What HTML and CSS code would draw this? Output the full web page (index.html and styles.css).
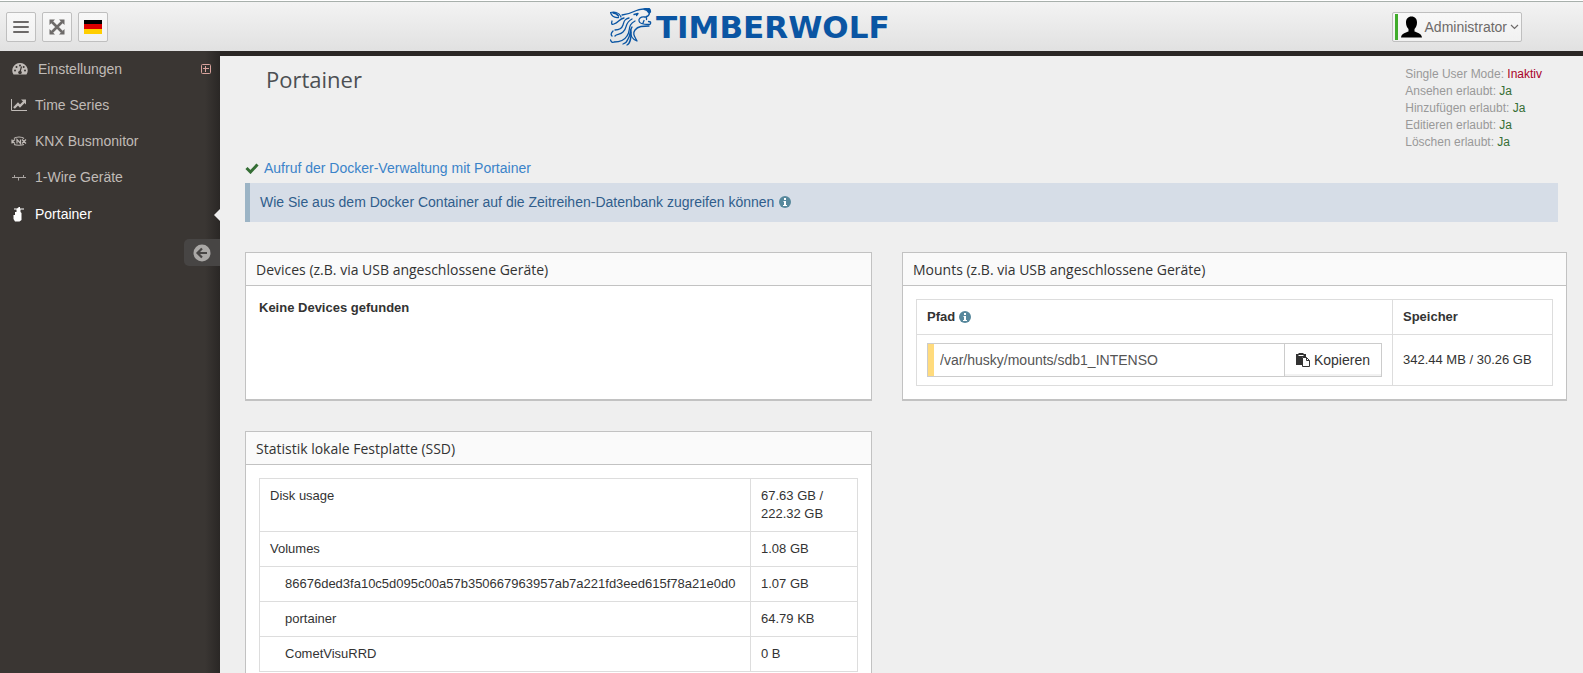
FILE: index.html
```html
<!DOCTYPE html>
<html lang="de">

<head>
    <meta charset="UTF-8">
    <meta name="viewport" content="width=device-width, initial-scale=1.0">
    <title>Portainer - Timberwolf</title>
    <link rel="stylesheet" href="styles.css">
</head>

<body>
    <header class="topbar">
        <div class="tools">
            <button type="button" class="tool" aria-label="Menü">
                <svg width="16" height="14" viewBox="0 0 16 14"><path d="M1 2h14M1 7h14M1 12h14" stroke="#6d6a69" stroke-width="2" stroke-linecap="round"/></svg>
            </button>
            <button type="button" class="tool" aria-label="Vollbild">
                <svg width="16" height="16" viewBox="0 0 16 16"><path d="M3 3l10 10M13 3L3 13" stroke="#6d6a69" stroke-width="2.600"/><path d="M.5.5h5.500L.5 6zM15.500.5H10L15.500 6zM.5 15.500H6L.5 10zM15.500 15.500H10l5.500-5.500z" fill="#6d6a69"/></svg>
            </button>
            <button type="button" class="tool" aria-label="Deutsch">
                <svg width="18" height="14" viewBox="0 0 18 14"><path d="M0 0h18v5H0z"/><path d="M0 4h18v6H0z" fill="#d00"/><path d="M0 9h18v5H0z" fill="#ffce00"/></svg>
            </button>
        </div>

        <a href="#" class="brand">
            <svg width="42" height="38" viewBox="0 0 42 38" fill="none" stroke="#0a55a3" stroke-width="1.300" stroke-linecap="round" stroke-linejoin="round">
                <path d="M11 9C9 4 4 3.500.5 4.500c1 3.500 4 5.500 8 5M3 5c2.500 0 4 1 5.500 3"/>
                <path d="M12 7c5-.5 8-1.500 12-3.500 3-1.500 6-2.500 13-3"/>
                <path d="M34 1.500L39 .5c1.500.5 1.500 2 1.500 3.500l-1.500 1L37 2.500z" fill="#0a55a3"/>
                <path d="M39.500 5.500c-1 3-3 3.500-5 3.500-4-.5-6 2-5.500 4 .5 3 5 3.500 9.500 3.500 2 0 2.500-1 2-2.500l-2-.5M36.500 8.500v3M33 15l1-2.500"/>
                <path d="M24 6.500l4-1-1.500 2"/>
                <path d="M39 18c-6 0-11 0-14 4-3 4 0 7 2 11-5-2-7-6-6-11"/>
                <path d="M19 10c-5 1-5 4-6 7s-4 5-8 5M14 10C9 11 9 14 4 16M2 13c-1 3 0 4 2 3"/>
                <path d="M22 11c-8 4-4 9-9 13-3 3-6 2-8 4M3 23c-2 2-2 4-1 5"/>
                <path d="M25 13c-8 4-4 10-8 15-3 5-9 6-13 6M.5 32c.5 2 2 3 4 2"/>
                <path d="M22 19c-3 4-1 8-4 12-1 3-2 4-5 5M17 37c4-2 4-8 4-13"/>
            </svg>
            <span>TIMBERWOLF</span>
        </a>

        <button type="button" class="user">
            <svg width="21" height="22" viewBox="0 0 21 22"><path d="M10.500.5c3.500 0 5.500 2.500 5.500 6 0 3-1 5-2.500 6.500v2.500c2 1 7 1.500 7.500 6H0c.5-4.500 5.500-5 7.500-6V13C6 11.500 5 9.500 5 6.500c0-3.500 2-6 5.500-6z"/></svg>
            <span>Administrator</span>
            <svg width="9" height="6" viewBox="0 0 9 6"><path d="M1 1l3.500 3.500L8 1" fill="none" stroke="#6d6a69" stroke-width="1.200"/></svg>
        </button>
    </header>

    <div class="layout">
        <aside class="sidebar">
            <nav>
                <a href="#" class="nav-item parent">
                    <svg width="16" height="14" viewBox="0 0 16 14"><path d="M8 1a7.500 7.500 0 0 1 6.500 11.500H1.500A7.500 7.500 0 0 1 8 1z" fill="#c0bbb7"/><path d="M8 10l1.500-5.500" stroke="#3a3633" stroke-width="1.200"/><g fill="#3a3633"><circle cx="8" cy="10.500" r="1.800"/><circle cx="3" cy="8.500" r="1"/><circle cx="4.500" cy="5" r="1"/><circle cx="8" cy="3.500" r="1"/><circle cx="11.700" cy="5" r="1"/><circle cx="13" cy="8.500" r="1"/></g></svg>
                    <span>Einstellungen</span>
                    <svg class="expand" width="10" height="10" viewBox="0 0 10 10"><path d="M1.500.5h7a1 1 0 0 1 1 1v7a1 1 0 0 1-1 1h-7a1 1 0 0 1-1-1v-7a1 1 0 0 1 1-1zM2 4.500h6M4.500 2v6" fill="none" stroke="#d8a39d"/></svg>
                </a>
                <a href="#" class="nav-item">
                    <svg width="16" height="14" viewBox="0 0 16 14"><path d="M.5 1v11.500H16" fill="none" stroke="#c0bbb7"/><path d="M3 10l4-4 2 2 4.500-4.500" fill="none" stroke="#c0bbb7" stroke-width="2.400"/><path d="M10 1.500h5v5z" fill="#c0bbb7"/></svg>
                    <span>Time Series</span>
                </a>
                <a href="#" class="nav-item">
                    <svg width="16" height="14" viewBox="0 0 16 14"><path d="M3 4.500c2-2 8-2 10 0M3 10.500c2 1 8 1 10 0M1 5.500v4M4 5.500l-2.500 2L4 9.500M6 9.500v-4l3.500 4v-4M11 5.500l4 4M15 5.500l-4 4" fill="none" stroke="#c0bbb7" stroke-width="1.200"/></svg>
                    <span>KNX Busmonitor</span>
                </a>
                <a href="#" class="nav-item">
                    <svg width="16" height="14" viewBox="0 0 16 14"><path d="M1 7.500h14M3.500 7.500V5M12.500 7.500V5M7.500 7.500v3" fill="none" stroke="#a8a3a0"/></svg>
                    <span>1-Wire Geräte</span>
                </a>
                <a href="#" class="nav-item active">
                    <svg width="16" height="16" viewBox="0 0 16 16"><path d="M8 1h1v1.500h4v1H9.500V6l1 1v7l-2 1.500H4L2.500 13V9H4V6h1.500V3.500H3v-1h3z" fill="#fff"/></svg>
                    <span>Portainer</span>
                </a>
            </nav>
            <button type="button" class="minify" aria-label="Menü einklappen">
                <svg width="18" height="18" viewBox="0 0 18 18"><circle cx="9" cy="9" r="8.500" fill="#aaa8a6"/><path d="M14 9H5M9 4.500L4.500 9 9 13.500" fill="none" stroke="#474544" stroke-width="2.200"/></svg>
            </button>
        </aside>

        <main class="content">
            <div class="page-head">
                <h1>Portainer</h1>
                <ul class="rights">
                    <li>Single User Mode: <span class="no">Inaktiv</span></li>
                    <li>Ansehen erlaubt: <span class="yes">Ja</span></li>
                    <li>Hinzufügen erlaubt: <span class="yes">Ja</span></li>
                    <li>Editieren erlaubt: <span class="yes">Ja</span></li>
                    <li>Löschen erlaubt: <span class="yes">Ja</span></li>
                </ul>
            </div>

            <p class="docker-link">
                <svg width="14" height="12" viewBox="0 0 14 12"><path d="M1.500 6l4 4L12.500 2.500" fill="none" stroke="#356e35" stroke-width="3"/></svg>
                <a href="#">Aufruf der Docker-Verwaltung mit Portainer</a>
            </p>
            <div class="alert">
                <span>Wie Sie aus dem Docker Container auf die Zeitreihen-Datenbank zugreifen können</span>
                <svg width="12" height="12" viewBox="0 0 12 12"><circle cx="6" cy="6" r="6" fill="#57889c"/><path d="M5 2h2v2H5zM4.500 5H7v4h1v1H4V9h1V6h-.5z" fill="#fff"/></svg>
            </div>

            <div class="panels">
                <section class="panel">
                    <h2>Devices (z.B. via USB angeschlossene Geräte)</h2>
                    <div class="panel-body">
                        <strong>Keine Devices gefunden</strong>
                    </div>
                </section>

                <section class="panel">
                    <h2>Mounts (z.B. via USB angeschlossene Geräte)</h2>
                    <div class="panel-body">
                        <table class="mounts">
                            <thead>
                                <tr>
                                    <th>Pfad <svg width="12" height="12" viewBox="0 0 12 12"><circle cx="6" cy="6" r="6" fill="#57889c"/><path d="M5 2h2v2H5zM4.500 5H7v4h1v1H4V9h1V6h-.5z" fill="#fff"/></svg></th>
                                    <th class="size">Speicher</th>
                                </tr>
                            </thead>
                            <tbody>
                                <tr>
                                    <td>
                                        <div class="copy-group">
                                            <input type="text" value="/var/husky/mounts/sdb1_INTENSO" aria-label="Pfad" readonly>
                                            <button type="button">
                                                <svg width="14" height="14" viewBox="0 0 14 14"><path d="M0 1h2.500V0h5v1H10v3H6v8H0z" fill="#333"/><path d="M2.500 2.500h5" stroke="#fff"/><path d="M6.500 4.500h4l3 3v6h-7zM10.500 4.500v3h3" fill="#fff" stroke="#333"/></svg>
                                                Kopieren
                                            </button>
                                        </div>
                                    </td>
                                    <td>342.44 MB / 30.26 GB</td>
                                </tr>
                            </tbody>
                        </table>
                    </div>
                </section>

                <section class="panel">
                    <h2>Statistik lokale Festplatte (SSD)</h2>
                    <div class="panel-body">
                        <table class="stats">
                            <tbody>
                                <tr>
                                    <td>Disk usage</td>
                                    <td class="value">67.63 GB / 222.32 GB</td>
                                </tr>
                                <tr>
                                    <td>Volumes</td>
                                    <td class="value">1.08 GB</td>
                                </tr>
                                <tr>
                                    <td class="sub">86676ded3fa10c5d095c00a57b350667963957ab7a221fd3eed615f78a21e0d0</td>
                                    <td class="value">1.07 GB</td>
                                </tr>
                                <tr>
                                    <td class="sub">portainer</td>
                                    <td class="value">64.79 KB</td>
                                </tr>
                                <tr>
                                    <td class="sub">CometVisuRRD</td>
                                    <td class="value">0 B</td>
                                </tr>
                            </tbody>
                        </table>
                    </div>
                </section>
            </div>
        </main>
    </div>
</body>

</html>
```
FILE: styles.css
```css
*,
*::before,
*::after {
  box-sizing: border-box;
}

body {
  display: flex;
  flex-direction: column;
  min-height: 100vh;
  margin: 0;
  font-family: "Liberation Sans", Arial, sans-serif;
  font-size: 13px;
  line-height: 18px;
  color: #333;
  background: #efefef;
  overflow-x: hidden;
}

a {
  color: #3b83c9;
  text-decoration: none;
}

button {
  font: inherit;
  cursor: pointer;
}

svg {
  flex: none;
}

h1,
h2,
p,
ul {
  margin: 0;
  padding: 0;
  font-weight: 400;
}

/* top bar */
.topbar {
  display: flex;
  justify-content: space-between;
  align-items: center;
  height: 51px;
  padding: 2px 61px 0 6px;
  border-top: 1px solid #fff;
  background: linear-gradient(#a8b0ac 1px, #f3f3f3 1px, #e1e1e1);
}

.tools {
  display: flex;
  gap: 6px;
}

.tool,
.user {
  display: flex;
  justify-content: center;
  align-items: center;
  height: 30px;
  padding: 0;
  border: 1px solid #bfbfbf;
  border-radius: 2px;
  background: linear-gradient(#f8f8f8, #f1f1f1);
  color: #6d6a69;
}

.tool {
  width: 30px;
}

.brand {
  display: flex;
  align-items: center;
  gap: 4px;
  height: 38px;
  font-family: "DejaVu Sans", sans-serif;
  font-weight: 700;
  font-size: 31px;
  line-height: 38px;
  color: #0a55a3;
}

.user {
  gap: 3px;
  padding: 0 2px;
  font-size: 14px;
}

.user::before {
  content: "";
  width: 3px;
  height: 26px;
  background: #40ac2b;
}

/* sidebar */
.layout {
  display: flex;
  flex: 1;
}

.sidebar {
  flex: 0 0 220px;
  background: linear-gradient(to left, #2a2725, #3a3633 15px);
}

.nav-item {
  position: relative;
  display: flex;
  align-items: center;
  gap: 8px;
  height: 36px;
  padding: 0 10px 0 11px;
  font-size: 14px;
  color: #c0bbb7;
}

.parent {
  gap: 10px;
  padding: 0 9px 0 12px;
}

.nav-item .expand {
  margin-left: auto;
}

.nav-item.active {
  height: 38px;
  color: #fff;
}

.nav-item.active::after {
  content: "";
  position: absolute;
  right: 0;
  top: 14px;
  border: 6px solid transparent;
  border-left: 0;
  border-right-color: #eee;
}

.minify {
  display: flex;
  align-items: center;
  width: 36px;
  height: 27px;
  margin: 6px 0 0 auto;
  padding: 0 9px;
  border: 0;
  border-radius: 5px 0 0 5px;
  background: #474544;
}

/* content */
.content {
  flex: 1;
  min-width: 0;
  padding: 8px 16px 30px 25px;
  border-top: 5px solid #2a2725;
}

.page-head {
  display: flex;
  justify-content: space-between;
  min-height: 94px;
  padding: 0 25px 0 21px;
}

.page-head h1 {
  font-family: "Open Sans", sans-serif;
  font-size: 22px;
  line-height: 30px;
  color: #4c4f53;
}

.rights {
  list-style: none;
  font-size: 12px;
  line-height: 17px;
  padding-top: 2px;
  color: #999;
}

.no {
  color: #a90329;
}

.yes {
  color: #356e35;
}

.docker-link {
  display: flex;
  align-items: center;
  gap: 5px;
  height: 25px;
  font-size: 14px;
  padding-bottom: 6px;
}

.alert {
  display: flex;
  align-items: center;
  gap: 5px;
  height: 39px;
  margin: 0 9px 30px 0;
  padding: 0 10px 2px;
  border-left: 5px solid #9cb4c5;
  background: #d6dde7;
  font-size: 14px;
  color: #305d8c;
}

.panels {
  display: grid;
  grid-template-columns: 627fr 665fr;
  gap: 30px;
}

.panel {
  border: 1px solid #c2c2c2;
  border-bottom-width: 2px;
  background: #fff;
}

.panel h2 {
  padding: 2px 10px 0;
  border-bottom: 1px solid #c2c2c2;
  background: #fafafa;
  font-family: "Open Sans", sans-serif;
  font-size: 14px;
  line-height: 30px;
}

.panel-body {
  padding: 13px;
}

table {
  width: 100%;
  border-collapse: collapse;
}

th,
td {
  padding: 8px 10px;
  border: 1px solid #ddd;
  text-align: left;
}

td {
  vertical-align: top;
}

.mounts td {
  vertical-align: middle;
}

th svg {
  vertical-align: -2px;
}

.size {
  width: 160px;
}

.value {
  width: 107px;
}

.stats .sub {
  padding-left: 25px;
}

.copy-group {
  display: flex;
  height: 34px;
}

.copy-group input {
  flex: 1;
  min-width: 0;
  padding: 0 6px 0 12px;
  border: 1px solid #ccc;
  border-right: 0;
  background: linear-gradient(to right, #ffdb7d 6px, #fff 6px);
  font: inherit;
  font-size: 14px;
  color: #555;
}

.copy-group button {
  display: flex;
  align-items: center;
  gap: 4px;
  padding: 0 11px;
  border: 1px solid #ccc;
  background: #fff;
  box-shadow: inset 0 -2px 0 #f2f2f2;
  font-size: 14px;
  color: #333;
}
```
